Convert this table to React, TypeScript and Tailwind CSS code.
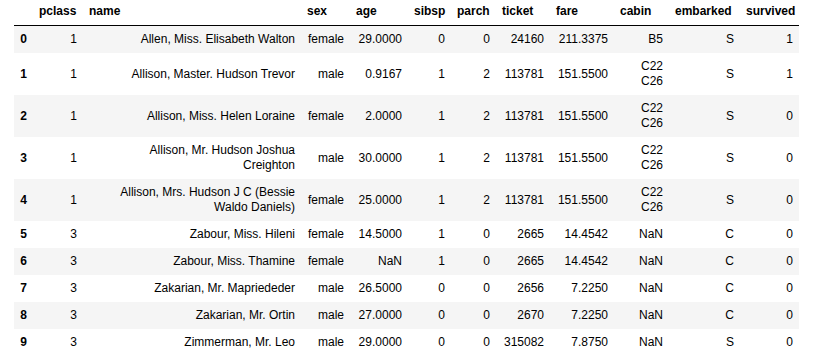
const columns = ["pclass", "name", "sex", "age", "sibsp", "parch", "ticket", "fare", "cabin", "embarked", "survived"];

const widths = ["w-[50px]", "w-[218px]", "w-[49px]", "w-[58px]", "w-[43px]", "w-[45px]", "w-[54px]", "w-[64px]", "w-[55px]", "w-[71px]", "w-[59px]"];

const rows: string[][] = [
    ["1", "Allen, Miss. Elisabeth Walton", "female", "29.0000", "0", "0", "24160", "211.3375", "B5", "S", "1"],
    ["1", "Allison, Master. Hudson Trevor", "male", "0.9167", "1", "2", "113781", "151.5500", "C22 C26", "S", "1"],
    ["1", "Allison, Miss. Helen Loraine", "female", "2.0000", "1", "2", "113781", "151.5500", "C22 C26", "S", "0"],
    ["1", "Allison, Mr. Hudson Joshua Creighton", "male", "30.0000", "1", "2", "113781", "151.5500", "C22 C26", "S", "0"],
    ["1", "Allison, Mrs. Hudson J C (Bessie Waldo Daniels)", "female", "25.0000", "1", "2", "113781", "151.5500", "C22 C26", "S", "0"],
    ["3", "Zabour, Miss. Hileni", "female", "14.5000", "1", "0", "2665", "14.4542", "NaN", "C", "0"],
    ["3", "Zabour, Miss. Thamine", "female", "NaN", "1", "0", "2665", "14.4542", "NaN", "C", "0"],
    ["3", "Zakarian, Mr. Mapriededer", "male", "26.5000", "0", "0", "2656", "7.2250", "NaN", "C", "0"],
    ["3", "Zakarian, Mr. Ortin", "male", "27.0000", "0", "0", "2670", "7.2250", "NaN", "C", "0"],
    ["3", "Zimmerman, Mr. Leo", "male", "29.0000", "0", "0", "315082", "7.8750", "NaN", "S", "0"],
];

export default function App() {
    return (
        <div className="bg-white min-h-screen pl-[14px] text-black" style={{ fontFamily: '"Liberation Sans", Arial, sans-serif' }}>
            <table className="table-fixed border-collapse w-[785px] text-[12px] leading-[15px]">
                <colgroup>
                    <col className="w-[19px]" />
                    {widths.map((w, i) => <col key={i} className={w} />)}
                </colgroup>
                <thead className="border-b border-black">
                    <tr>
                        <th className="pt-[4px] pb-[6px] px-[6px]"></th>
                        {columns.map((c) => (
                            <th key={c} className="pt-[4px] pb-[6px] px-[6px] text-left font-bold align-middle">{c}</th>
                        ))}
                    </tr>
                </thead>
                <tbody>
                    {rows.map((row, index) => (
                        <tr key={index} className={index % 2 == 0 ? "bg-[#f5f5f5]" : "bg-white"}>
                            <th className="py-[6px] px-[6px] text-right font-bold align-middle">{index}</th>
                            {row.map((cell, j) => (
                                <td key={j} className="py-[6px] px-[6px] text-right align-middle">
                                    {j == 1 ? <div className="ml-auto max-w-[192px]">{cell}</div> : cell}
                                </td>
                            ))}
                        </tr>
                    ))}
                </tbody>
            </table>
        </div>
    );
}
